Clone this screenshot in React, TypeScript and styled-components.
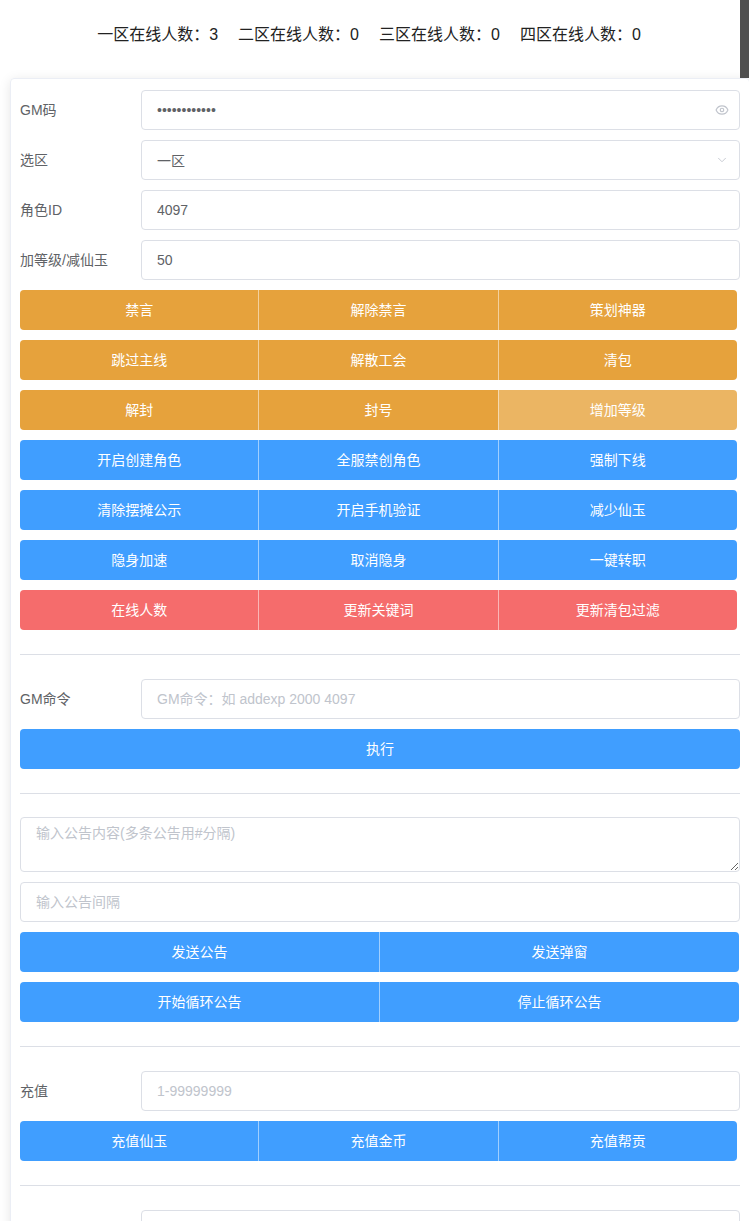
import React from 'react';
import styled, {createGlobalStyle} from "styled-components";
import {Eye, ChevronDown} from "lucide-react";

const GlobalStyle = createGlobalStyle`
  html, body {
    margin: 0;
    padding: 0;
    background: #fff;
    overflow-x: hidden;
  }
  body {
    font-family: "Liberation Sans", "Noto Sans CJK SC", sans-serif;
    font-size: 14px;
    color: #606266;
  }
  * {
    box-sizing: border-box;
  }
`
const Page = styled.div`
  width: 749px;
`
const Header = styled.div`
  position: relative;
  width: 740px;
  height: 78px;
  padding-top: 25px;
  padding-right: 2px;
  display: flex;
  justify-content: center;
  gap: 20px;
  font-size: 16px;
  line-height: 20px;
  color: #222;
  &::after {
    content: "";
    position: absolute;
    top: 0;
    right: -9px;
    width: 9px;
    height: 78px;
    background: #4f4f4f;
  }
`
const Card = styled.div`
  margin-left: 10px;
  width: 740px;
  border: 1px solid #ebeef5;
  border-radius: 4px;
  box-shadow: 0 2px 12px 0 rgba(0, 0, 0, .1);
  padding: 11px 9px 20px 9px;
  display: flex;
  flex-direction: column;
  gap: 10px;
`
const FormRow = styled.div`
  display: flex;
  align-items: center;
  height: 40px;
`
const Label = styled.label`
  width: 121px;
  flex-shrink: 0;
  line-height: 40px;
  font-size: 14px;
  color: #606266;
`
const InputWrap = styled.div`
  position: relative;
  flex: 1;
  height: 40px;
`
const Input = styled.input<{ $full?: boolean }>`
  width: ${p => p.$full ? "720px" : "100%"};
  height: 40px;
  border: 1px solid #dcdfe6;
  border-radius: 4px;
  padding: 0 15px;
  font-family: inherit;
  font-size: 14px;
  color: #606266;
  outline: none;
  background: #fff;
  &::placeholder {
    color: #c0c4cc;
  }
`
const Suffix = styled.span`
  position: absolute;
  right: 11px;
  top: 0;
  height: 40px;
  display: flex;
  align-items: center;
  color: #c0c4cc;
`
const TextArea = styled.textarea`
  display: block;
  width: 720px;
  height: 55px;
  margin-top: -1px;
  border: 1px solid #dcdfe6;
  border-radius: 4px;
  padding: 5px 15px;
  font-family: inherit;
  font-size: 14px;
  line-height: 1.5;
  color: #606266;
  outline: none;
  &::placeholder {
    color: #c0c4cc;
  }
`
const ButtonGroup = styled.div<{ $width: number }>`
  display: flex;
  width: ${p => p.$width}px;
  height: 40px;
`
const tones: Record<string, string> = {
    warning: "#e6a23c",
    warningLight: "#ebb563",
    primary: "#409eff",
    danger: "#f56c6c",
}
const Btn = styled.button<{ $tone: string }>`
  flex: 1;
  height: 40px;
  border: none;
  background: ${p => tones[p.$tone]};
  color: #fff;
  font-family: inherit;
  font-size: 14px;
  cursor: pointer;
  padding: 0 0 2px 0;
  & + & {
    border-left: 1px solid rgba(255, 255, 255, .5);
  }
  &:first-child {
    border-radius: 4px 0 0 4px;
  }
  &:last-child {
    border-radius: 0 4px 4px 0;
  }
  &:only-child {
    border-radius: 4px;
  }
`
const Divider = styled.div`
  height: 1px;
  background: #dcdfe6;
  margin: 14px 0;
  width: 720px;
`

const counts = [
    {zone: "一区", n: 3},
    {zone: "二区", n: 0},
    {zone: "三区", n: 0},
    {zone: "四区", n: 0},
]

const groups: { tone: string, items: string[] }[] = [
    {tone: "warning", items: ["禁言", "解除禁言", "策划神器"]},
    {tone: "warning", items: ["跳过主线", "解散工会", "清包"]},
    {tone: "warning", items: ["解封", "封号", "增加等级"]},
    {tone: "primary", items: ["开启创建角色", "全服禁创角色", "强制下线"]},
    {tone: "primary", items: ["清除摆摊公示", "开启手机验证", "减少仙玉"]},
    {tone: "primary", items: ["隐身加速", "取消隐身", "一键转职"]},
    {tone: "danger", items: ["在线人数", "更新关键词", "更新清包过滤"]},
]

const App = () => {
    return (
        <Page>
            <GlobalStyle/>
            <Header>
                {counts.map(c => (
                    <span key={c.zone}>{c.zone}在线人数：{c.n}</span>
                ))}
            </Header>
            <Card>
                <FormRow>
                    <Label>GM码</Label>
                    <InputWrap>
                        <Input type="password" value="123456789012" readOnly/>
                        <Suffix><Eye size={14} strokeWidth={2}/></Suffix>
                    </InputWrap>
                </FormRow>
                <FormRow>
                    <Label>选区</Label>
                    <InputWrap>
                        <Input value="一区" readOnly/>
                        <Suffix><ChevronDown size={14} strokeWidth={1.5}/></Suffix>
                    </InputWrap>
                </FormRow>
                <FormRow>
                    <Label>角色ID</Label>
                    <InputWrap><Input value="4097" readOnly/></InputWrap>
                </FormRow>
                <FormRow>
                    <Label>加等级/减仙玉</Label>
                    <InputWrap><Input value="50" readOnly/></InputWrap>
                </FormRow>
                {groups.map((g, i) => (
                    <ButtonGroup key={i} $width={717}>
                        {g.items.map(t => (
                            <Btn key={t} $tone={t === "增加等级" ? "warningLight" : g.tone}>{t}</Btn>
                        ))}
                    </ButtonGroup>
                ))}
                <Divider/>
                <FormRow>
                    <Label>GM命令</Label>
                    <InputWrap><Input placeholder="GM命令：如 addexp 2000 4097"/></InputWrap>
                </FormRow>
                <ButtonGroup $width={720}>
                    <Btn $tone="primary">执行</Btn>
                </ButtonGroup>
                <Divider/>
                <TextArea rows={2} placeholder="输入公告内容(多条公告用#分隔)"/>
                <Input $full placeholder="输入公告间隔"/>
                <ButtonGroup $width={719}>
                    <Btn $tone="primary">发送公告</Btn>
                    <Btn $tone="primary">发送弹窗</Btn>
                </ButtonGroup>
                <ButtonGroup $width={719}>
                    <Btn $tone="primary">开始循环公告</Btn>
                    <Btn $tone="primary">停止循环公告</Btn>
                </ButtonGroup>
                <Divider/>
                <FormRow>
                    <Label>充值</Label>
                    <InputWrap><Input placeholder="1-99999999"/></InputWrap>
                </FormRow>
                <ButtonGroup $width={717}>
                    <Btn $tone="primary">充值仙玉</Btn>
                    <Btn $tone="primary">充值金币</Btn>
                    <Btn $tone="primary">充值帮贡</Btn>
                </ButtonGroup>
                <Divider/>
                <FormRow>
                    <Label></Label>
                    <InputWrap><Input/></InputWrap>
                </FormRow>
            </Card>
        </Page>
    );
};

export default App;
